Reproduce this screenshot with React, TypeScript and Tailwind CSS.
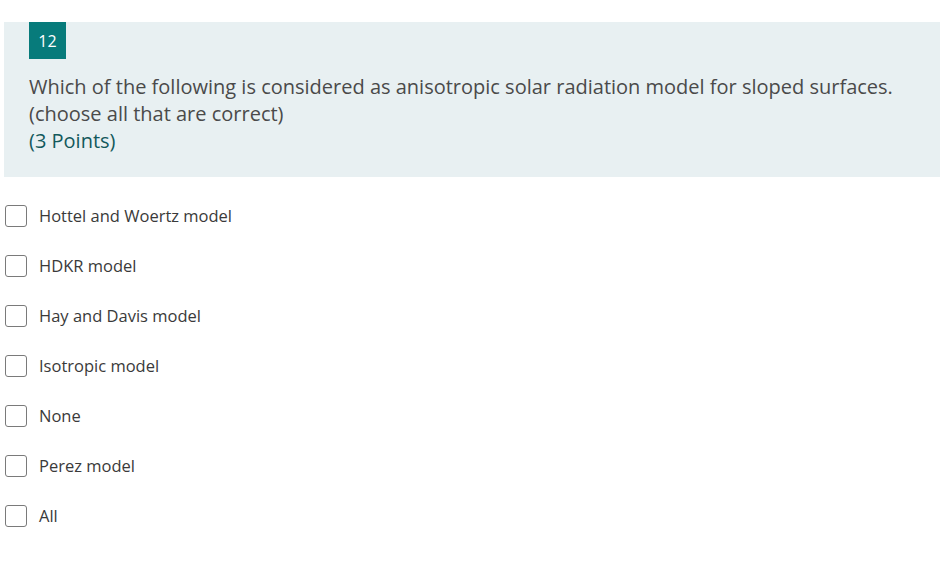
import React from 'react';

const options = [
  'Hottel and Woertz model',
  'HDKR model',
  'Hay and Davis model',
  'Isotropic model',
  'None',
  'Perez model',
  'All',
];

export default function App() {
  return (
    <div className="h-[580px] w-[940px] bg-white pt-[22px] font-['Open_Sans',sans-serif]">
      {/* Question header */}
      <div className="ml-[4px] h-[155px] bg-[#e8f0f2] pl-[25px]">
        <div className="flex h-[37px] w-[37px] items-center justify-center bg-[#077b7b] text-[16px] text-white">
          12
        </div>
        <div className="mt-[14px] text-[20px] leading-[27px] text-[#4a4a4a]">
          <div>Which of the following is considered as anisotropic solar radiation model for sloped surfaces.</div>
          <div>(choose all that are correct)</div>
          <div className="text-[#13595c]">(3 Points)</div>
        </div>
      </div>

      {/* Options */}
      <div className="mt-[14px] flex flex-col">
        {options.map((o) => (
          <label key={o} className="flex h-[50px] items-center">
            <span className="ml-[5px] h-[22px] w-[22px] rounded-[3px] border border-[#7a7a7a] bg-white" />
            <span className="ml-[12px] text-[16.5px] text-[#3a3a3a]">{o}</span>
          </label>
        ))}
      </div>
    </div>
  );
}
